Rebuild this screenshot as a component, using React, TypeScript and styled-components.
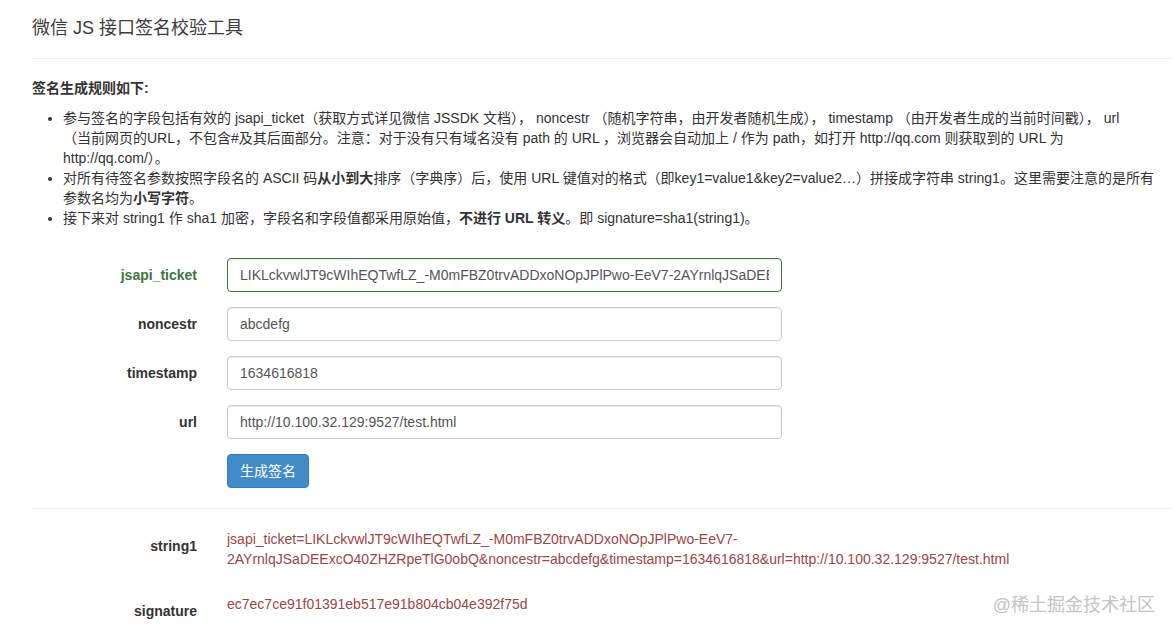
import React from "react";
import styled, { createGlobalStyle } from "styled-components";

const GlobalStyle = createGlobalStyle`
  html, body { margin: 0; padding: 0; background: #fff; }
  body {
    font-family: "Liberation Sans", Arial, "Noto Sans CJK SC", sans-serif;
    font-size: 14px;
    line-height: 20px;
    color: #333;
  }
  * { box-sizing: border-box; }
`;

const Page = styled.div`
  position: relative;
  padding: 18px 2px 20px 32px;
  min-height: 635px;
`;

const Title = styled.h1`
  margin: 0;
  font-size: 18px;
  line-height: 20px;
  font-weight: normal;
  color: #3d3d3d;
`;

const Divider = styled.hr<{ $top: number; $bottom: number }>`
  margin: ${(p) => p.$top}px 0 ${(p) => p.$bottom}px;
  border: 0;
  border-top: 1px solid #eee;
  height: 0;
`;

const RulesTitle = styled.div`
  font-weight: bold;
`;

const RuleList = styled.ul`
  margin: 10px 0 0;
  padding-left: 31px;
`;

const Rule = styled.li`
  white-space: nowrap;
`;

const Form = styled.div`
  margin-top: 30px;
  display: grid;
  grid-template-columns: 165px 555px;
  column-gap: 30px;
  row-gap: 15px;
  align-items: center;
`;

const Label = styled.label<{ $ok?: boolean }>`
  text-align: right;
  font-weight: bold;
  color: ${(p) => (p.$ok ? "#3c763d" : "#333")};
`;

const Input = styled.input<{ $ok?: boolean }>`
  display: block;
  width: 100%;
  height: 34px;
  padding: 6px 12px;
  font-family: inherit;
  font-size: 14px;
  line-height: 20px;
  color: #555;
  background: #fff;
  border: 1px solid ${(p) => (p.$ok ? "#3c763d" : "#ccc")};
  border-radius: 4px;
  box-shadow: inset 0 1px 1px rgba(0, 0, 0, 0.075);
  outline: none;
`;

const ButtonCell = styled.div`
  grid-column: 2;
`;

const Button = styled.button`
  height: 34px;
  padding: 6px 12px;
  font-family: inherit;
  font-size: 14px;
  line-height: 20px;
  color: #fff;
  background: #428bca;
  border: 1px solid #357ebd;
  border-radius: 4px;
  cursor: pointer;
`;

const Results = styled.div`
  display: grid;
  grid-template-columns: 165px 1fr;
  column-gap: 30px;
  row-gap: 25px;
  align-items: start;
`;

const ResultLabel = styled.div`
  text-align: right;
  font-weight: bold;
  padding-top: 7px;
`;

const ResultValue = styled.div`
  color: #9e4545;
  padding-right: 20px;
`;

const Watermark = styled.div`
  position: absolute;
  right: 19px;
  top: 594px;
  font-size: 18px;
  line-height: 22px;
  color: #c4c4c4;
`;

const fields = [
  { name: "jsapi_ticket", value: "LIKLckvwlJT9cWIhEQTwfLZ_-M0mFBZ0trvADDxoNOpJPlPwo-EeV7-2AYrnlqJSaDEExcO40ZHZRpeTlG0obQ", ok: true },
  { name: "noncestr", value: "abcdefg" },
  { name: "timestamp", value: "1634616818" },
  { name: "url", value: "http://10.100.32.129:9527/test.html" },
];

export default function App() {
  return (
    <>
      <GlobalStyle />
      <Page>
        <Title>微信 JS 接口签名校验工具</Title>
        <Divider $top={20} $bottom={19} />
        <RulesTitle>签名生成规则如下:</RulesTitle>
        <RuleList>
          <Rule>
            参与签名的字段包括有效的 jsapi_ticket（获取方式详见微信 JSSDK 文档）， noncestr （随机字符串，由开发者随机生成）， timestamp （由开发者生成的当前时间戳）， url
            <br />
            （当前网页的URL，不包含#及其后面部分。注意：对于没有只有域名没有 path 的 URL ，浏览器会自动加上 / 作为 path，如打开 http://qq.com 则获取到的 URL 为
            <br />
            http://qq.com/）。
          </Rule>
          <Rule>
            对所有待签名参数按照字段名的 ASCII 码<b>从小到大</b>排序（字典序）后，使用 URL 键值对的格式（即key1=value1&amp;key2=value2…）拼接成字符串 string1。这里需要注意的是所有
            <br />
            参数名均为<b>小写字符</b>。
          </Rule>
          <Rule>
            接下来对 string1 作 sha1 加密，字段名和字段值都采用原始值，<b>不进行 URL 转义</b>。即 signature=sha1(string1)。
          </Rule>
        </RuleList>
        <Form>
          {fields.map((f) => (
            <React.Fragment key={f.name}>
              <Label $ok={f.ok}>{f.name}</Label>
              <Input $ok={f.ok} defaultValue={f.value} readOnly />
            </React.Fragment>
          ))}
          <ButtonCell>
            <Button>生成签名</Button>
          </ButtonCell>
        </Form>
        <Divider $top={20} $bottom={20} />
        <Results>
          <ResultLabel>string1</ResultLabel>
          <ResultValue>
            jsapi_ticket=LIKLckvwlJT9cWIhEQTwfLZ_-M0mFBZ0trvADDxoNOpJPlPwo-EeV7-2AYrnlqJSaDEExcO40ZHZRpeTlG0obQ&amp;noncestr=abcdefg&amp;timestamp=1634616818&amp;url=http://10.100.32.129:9527/test.html
          </ResultValue>
          <ResultLabel>signature</ResultLabel>
          <ResultValue>ec7ec7ce91f01391eb517e91b804cb04e392f75d</ResultValue>
        </Results>
        <Watermark>@稀土掘金技术社区</Watermark>
      </Page>
    </>
  );
}
